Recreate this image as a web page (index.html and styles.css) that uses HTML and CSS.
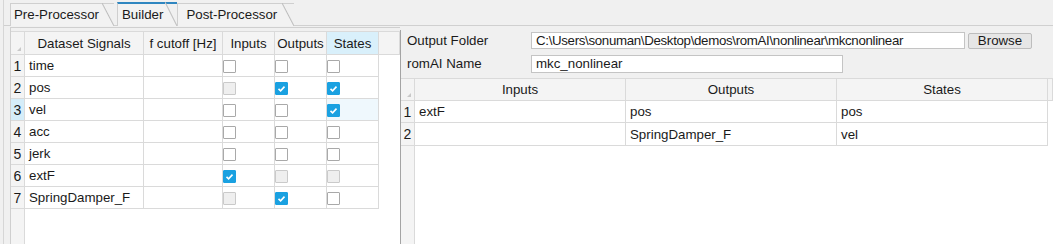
FILE: index.html
```html
<!DOCTYPE html>
<html lang="en">
<head>
    <meta charset="UTF-8">
    <title>romAI Builder</title>
    <link rel="stylesheet" href="styles.css">
</head>
<body>

    <div class="window">
        <div class="tabbar">
            <div class="tab">Pre-Processor</div>
            <div class="tab active">Builder</div>
            <div class="tab">Post-Processor</div>
        </div>

        <div class="pane">
            <!-- Signals table -->
            <div class="signals">
                <div class="sig-head">
                    <div class="cell corner"></div>
                    <div class="cell hcell">Dataset Signals</div>
                    <div class="cell hcell">f cutoff [Hz]</div>
                    <div class="cell hcell">Inputs</div>
                    <div class="cell hcell">Outputs</div>
                    <div class="cell hcell sel">States</div>
                    <div class="cell hcell"></div>
                </div>

                <div class="sig-row">
                    <div class="cell idx">1</div>
                    <div class="cell txt">time</div>
                    <div class="cell"></div>
                    <div class="cell"><span class="cb"></span></div>
                    <div class="cell"><span class="cb"></span></div>
                    <div class="cell"><span class="cb"></span></div>
                </div>
                <div class="sig-row">
                    <div class="cell idx">2</div>
                    <div class="cell txt">pos</div>
                    <div class="cell"></div>
                    <div class="cell"><span class="cb off"></span></div>
                    <div class="cell"><span class="cb on"><svg viewBox="0 0 13 13"><polyline points="3.5,6.8 5.6,8.8 9.5,4.6"/></svg></span></div>
                    <div class="cell"><span class="cb on"><svg viewBox="0 0 13 13"><polyline points="3.5,6.8 5.6,8.8 9.5,4.6"/></svg></span></div>
                </div>
                <div class="sig-row">
                    <div class="cell idx sel">3</div>
                    <div class="cell txt">vel</div>
                    <div class="cell"></div>
                    <div class="cell"><span class="cb"></span></div>
                    <div class="cell"><span class="cb"></span></div>
                    <div class="cell current"><span class="cb on"><svg viewBox="0 0 13 13"><polyline points="3.5,6.8 5.6,8.8 9.5,4.6"/></svg></span></div>
                </div>
                <div class="sig-row">
                    <div class="cell idx">4</div>
                    <div class="cell txt">acc</div>
                    <div class="cell"></div>
                    <div class="cell"><span class="cb"></span></div>
                    <div class="cell"><span class="cb"></span></div>
                    <div class="cell"><span class="cb"></span></div>
                </div>
                <div class="sig-row">
                    <div class="cell idx">5</div>
                    <div class="cell txt">jerk</div>
                    <div class="cell"></div>
                    <div class="cell"><span class="cb"></span></div>
                    <div class="cell"><span class="cb"></span></div>
                    <div class="cell"><span class="cb"></span></div>
                </div>
                <div class="sig-row">
                    <div class="cell idx">6</div>
                    <div class="cell txt">extF</div>
                    <div class="cell"></div>
                    <div class="cell"><span class="cb on"><svg viewBox="0 0 13 13"><polyline points="3.5,6.8 5.6,8.8 9.5,4.6"/></svg></span></div>
                    <div class="cell"><span class="cb off"></span></div>
                    <div class="cell"><span class="cb off"></span></div>
                </div>
                <div class="sig-row">
                    <div class="cell idx">7</div>
                    <div class="cell txt">SpringDamper_F</div>
                    <div class="cell"></div>
                    <div class="cell"><span class="cb off"></span></div>
                    <div class="cell"><span class="cb on"><svg viewBox="0 0 13 13"><polyline points="3.5,6.8 5.6,8.8 9.5,4.6"/></svg></span></div>
                    <div class="cell"><span class="cb"></span></div>
                </div>
                <div class="sig-rest"></div>
            </div>

            <div class="splitter"></div>

            <!-- Builder settings -->
            <div class="builder">
                <div class="form-row">
                    <div class="label">Output Folder</div>
                    <div class="field wide">C:\Users\sonuman\Desktop\demos\romAI\nonlinear\mkcnonlinear</div>
                    <button class="browse">Browse</button>
                </div>
                <div class="form-row">
                    <div class="label">romAI Name</div>
                    <div class="field name">mkc_nonlinear</div>
                </div>

                <div class="model">
                    <div class="model-head">
                        <div class="cell corner"></div>
                        <div class="cell hcell">Inputs</div>
                        <div class="cell hcell">Outputs</div>
                        <div class="cell hcell">States</div>
                        <div class="cell hcell"></div>
                    </div>
                    <div class="model-row">
                        <div class="cell idx">1</div>
                        <div class="cell txt">extF</div>
                        <div class="cell txt">pos</div>
                        <div class="cell txt">pos</div>
                    </div>
                    <div class="model-row tall">
                        <div class="cell idx">2</div>
                        <div class="cell txt"></div>
                        <div class="cell txt">SpringDamper_F</div>
                        <div class="cell txt">vel</div>
                    </div>
                    <div class="model-rest"></div>
                </div>
            </div>
        </div>
    </div>

</body>
</html>
```

FILE: styles.css
```css
body {
    margin: 0;
    background-color: #f0f0f0;
    font-family: "Liberation Sans", Arial, sans-serif;
    font-size: 13.3px;
    color: #1a1a1a;
}

.window {
    height: 244px;
    margin-left: 3px;
    border-left: 1px solid #d6d6d6;
    display: flex;
    flex-direction: column;
    overflow: hidden;
}

/* Tabs */
.tabbar {
    display: flex;
    height: 26px;
    padding: 2px 0 0 6px;
    box-sizing: border-box;
    border-bottom: 1px solid #d0d0d0;
}

.tab {
    position: relative;
    height: 23px;
    line-height: 22px;
    padding: 0 15px 0 3px;
    margin-right: 3px;
    margin-top: 1px;
    border-top: 1px solid #cfcfcf;
    border-left: 1px solid #cfcfcf;
    box-sizing: border-box;
    background: linear-gradient(to right, #f2f2f2 calc(100% - 12px), transparent calc(100% - 12px));
}

.tab::after {
    content: "";
    position: absolute;
    top: -1px;
    right: 0;
    width: 12px;
    height: 23px;
    background: linear-gradient(to top right, #f2f2f2 calc(50% - 1px), #bdbdbd 50%, transparent calc(50% + 1px));
}

.tab.active {
    margin-top: 0;
    height: 24px;
    border-top: 2px solid #2f86c0;
    padding: 0 14px 0 4px;
    margin-right: 0;
    z-index: 1;
}

.tab.active::after {
    top: -2px;
    height: 24px;
}

.tab.active + .tab {
    padding-left: 8px;
    padding-right: 17px;
}

/* Panes */
.pane {
    flex: 1;
    display: flex;
}

.splitter {
    width: 1px;
    background-color: #a4a4a4;
    margin-top: 4px;
}

.cell {
    box-sizing: border-box;
    border-right: 1px solid #dadada;
    border-bottom: 1px solid #dadada;
    display: flex;
    align-items: center;
    white-space: nowrap;
    overflow: hidden;
}

.hcell {
    justify-content: center;
    background-color: #f4f4f4;
}

.hcell.sel {
    background-color: #d9f0fb;
}

.idx {
    justify-content: center;
    background-color: #f4f4f4;
    font-size: 14px;
}

.idx.sel {
    background-color: #d5edf9;
}

.txt {
    padding-left: 4px;
}

.current {
    background-color: #eff8fd;
}

.corner {
    position: relative;
    background-color: #f4f4f4;
}

.corner::after {
    content: "";
    position: absolute;
    right: 3px;
    bottom: 3px;
    border-left: 4px solid transparent;
    border-bottom: 4px solid #c8c8c8;
}

/* Signals table */
.signals {
    width: 389px;
    margin-left: 6px;
    margin-top: 1px;
    border-top: 1px solid #cfcfcf;
    border-left: 1px solid #cfcfcf;
    padding-top: 3px;
    display: flex;
    flex-direction: column;
}

.sig-head,
.sig-row {
    display: grid;
    grid-template-columns: 14px 119px 79px 52px 52px 52px;
    background-color: #fff;
}

.sig-head {
    grid-template-columns: 14px 119px 79px 52px 52px 52px 1fr;
    border-top: 1px solid #dadada;
    height: 23px;
}

.sig-row {
    height: 22px;
}

.sig-rest,
.model-rest {
    flex: 1;
    background: linear-gradient(to right, #f4f4f4 13px, #dadada 13px, #dadada 14px, #fff 14px);
}

/* Checkboxes */
.cb {
    width: 13px;
    height: 13px;
    box-sizing: border-box;
    border: 1px solid #a9a9a9;
    background-color: #fff;
    border-radius: 1px;
    margin-top: 1px;
    display: block;
}

.cb.off {
    background-color: #efefef;
    border-color: #cacaca;
}

.cb.on {
    background-color: #1aa1e1;
    border-color: #1aa1e1;
    position: relative;
}

.cb svg {
    position: absolute;
    left: -1px;
    top: -1px;
    width: 13px;
    height: 13px;
}

.cb polyline {
    fill: none;
    stroke: #fff;
    stroke-width: 1.6;
}

/* Builder side */
.builder {
    flex: 1;
    display: flex;
    flex-direction: column;
    padding-top: 6px;
    gap: 6px;
}

.form-row {
    display: flex;
    align-items: center;
    height: 17px;
    padding-left: 6px;
}

.label {
    width: 124px;
}

.field {
    height: 17px;
    box-sizing: border-box;
    border: 1px solid #c4c4c4;
    background-color: #fff;
    padding-left: 4px;
    line-height: 15px;
    white-space: nowrap;
    overflow: hidden;
}

.field.wide {
    width: 434px;
    letter-spacing: -0.33px;
}

.field.name {
    width: 312px;
    height: 18px;
    line-height: 16px;
    margin-top: 1px;
}

.browse {
    margin-left: 3px;
    width: 64px;
    height: 16px;
    padding: 0;
    font: inherit;
    line-height: 14px;
    color: #1a1a1a;
    background-color: #e6e6e6;
    border: 1px solid #bdbdbd;
    border-radius: 2px;
}

/* Model table */
.model {
    flex: 1;
    display: flex;
    flex-direction: column;
    background-color: #fff;
}

.model-head,
.model-row {
    display: grid;
    grid-template-columns: 14px 211px 211px 211px 1fr;
}

.model-row {
    grid-template-columns: 14px 211px 211px 211px;
    height: 22px;
}

.model-row.tall {
    height: 23px;
}

.model-head {
    height: 22px;
    border-top: 1px solid #dadada;
}
```
